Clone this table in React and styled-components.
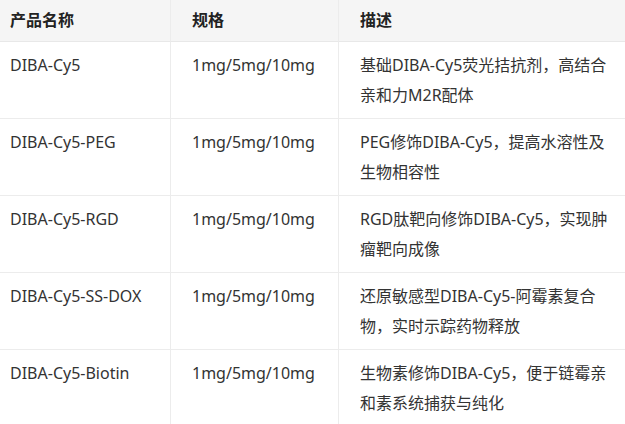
import React from "react";
import styled, { createGlobalStyle } from "styled-components";

const Global = createGlobalStyle`
  html, body { margin: 0; padding: 0; background: #fff; overflow: hidden; }
  body { font-family: "Noto Sans", "Noto Sans CJK SC", sans-serif; }
`;

const Table = styled.div`
  display: grid;
  grid-template-columns: 171px 168px 292px;
  width: 631px;
  color: #333;
  font-size: 16px;
  line-height: 30px;
`;

const HeadCell = styled.div`
  background: #f5f5f5;
  font-weight: 700;
  color: #222;
  height: 42px;
  box-sizing: border-box;
  padding: 5px 20px 6px ${(p) => (p.$first ? "10px" : "21px")};
  border-right: ${(p) => (p.$last ? "none" : "1px solid #ececec")};
  border-bottom: 1px solid #e8e8e8;
`;

const Cell = styled.div`
  box-sizing: border-box;
  min-height: 77px;
  padding: 8px 12px 8px ${(p) => (p.$first ? "10px" : "21px")};
  border-right: ${(p) => (p.$last ? "none" : "1px solid #ececec")};
  border-bottom: 1px solid #ececec;
`;

const rows = [
  ["DIBA-Cy5", "1mg/5mg/10mg", "基础DIBA-Cy5荧光拮抗剂，高结合亲和力M2R配体"],
  ["DIBA-Cy5-PEG", "1mg/5mg/10mg", "PEG修饰DIBA-Cy5，提高水溶性及生物相容性"],
  ["DIBA-Cy5-RGD", "1mg/5mg/10mg", "RGD肽靶向修饰DIBA-Cy5，实现肿瘤靶向成像"],
  ["DIBA-Cy5-SS-DOX", "1mg/5mg/10mg", "还原敏感型DIBA-Cy5-阿霉素复合物，实时示踪药物释放"],
  ["DIBA-Cy5-Biotin", "1mg/5mg/10mg", "生物素修饰DIBA-Cy5，便于链霉亲和素系统捕获与纯化"],
];

export default function App() {
  return (
    <>
      <Global />
      <Table>
        <HeadCell $first>产品名称</HeadCell>
        <HeadCell>规格</HeadCell>
        <HeadCell $last>描述</HeadCell>
        {rows.map((r) => (
          <React.Fragment key={r[0]}>
            <Cell $first>{r[0]}</Cell>
            <Cell>{r[1]}</Cell>
            <Cell $last>{r[2]}</Cell>
          </React.Fragment>
        ))}
      </Table>
    </>
  );
}
